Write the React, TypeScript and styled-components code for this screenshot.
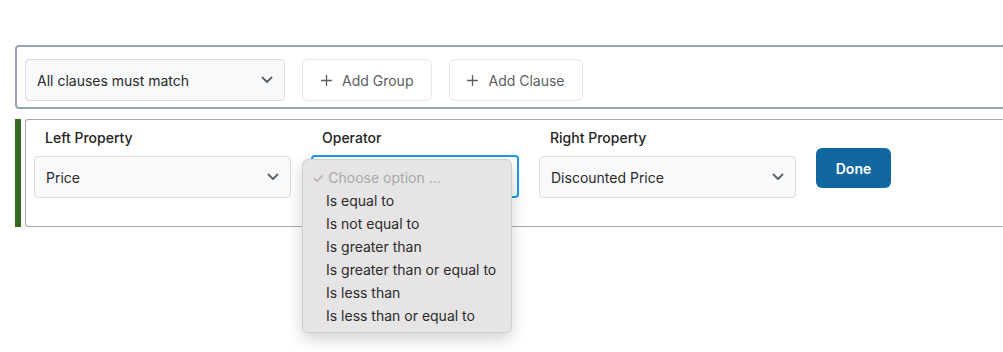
import styled, { createGlobalStyle } from "styled-components";

const GlobalStyle = createGlobalStyle`
  body {
    margin: 0;
    background: #ffffff;
    font-family: Inter, "Noto Sans", "Liberation Sans", sans-serif;
  }
`;

const Viewport = styled.div`
  width: 100vw;
  height: 352px;
  overflow: hidden;
`;

const Page = styled.div`
  padding: 45px 0 0 15px;
  width: 1100px;
  display: flex;
  flex-direction: column;
  gap: 10px;
`;

const GroupBox = styled.div`
  height: 64px;
  box-sizing: border-box;
  border: 2px solid #98a3b6;
  border-radius: 4px;
  padding: 12px 8px 0 8px;
  display: flex;
  gap: 17px;
`;

const SelectBox = styled.div<{ $width: number }>`
  position: relative;
  width: ${(p) => p.$width}px;
  height: 42px;
  box-sizing: border-box;
  background: #f8f9fb;
  border: 1px solid #d9dce1;
  border-radius: 4px;
  display: flex;
  align-items: center;
  justify-content: space-between;
  padding: 0 11px;
  font-size: 14px;
  color: #2a2a2a;
`;

const FocusSelect = styled.div`
  position: relative;
  width: 208px;
  height: 43px;
  margin-top: -1px;
  box-sizing: border-box;
  background: #ffffff;
  border: 2px solid #1a9be6;
  border-radius: 4px;
`;

const GhostButton = styled.button<{ $pad: number }>`
  height: 42px;
  box-sizing: border-box;
  background: #ffffff;
  border: 1px solid #e4e6ea;
  border-radius: 6px;
  padding: 0 ${(p) => p.$pad}px;
  display: flex;
  align-items: center;
  gap: 10px;
  font-family: inherit;
  font-size: 14px;
  color: #5a5d63;
`;

const ClauseRow = styled.div`
  display: flex;
  gap: 4px;
  height: 108px;
`;

const Marker = styled.div`
  width: 6px;
  background: #346b20;
`;

const ClauseBox = styled.div`
  flex: 1;
  border: 1px solid #a3a8b1;
  border-right: none;
  border-radius: 3px 0 0 3px;
  padding: 8px 8px 0 8px;
  display: flex;
  gap: 20px;
`;

const Field = styled.div`
  display: flex;
  flex-direction: column;
`;

const Label = styled.div`
  font-size: 14px;
  font-weight: 500;
  color: #242424;
  line-height: 20px;
  padding: 0 11px;
  margin-bottom: 8px;
`;

const DoneButton = styled.button`
  margin-top: 20px;
  width: 75px;
  height: 40px;
  background: #11689f;
  color: #ffffff;
  border: none;
  border-radius: 6px;
  font-family: inherit;
  font-weight: 600;
  font-size: 14px;
`;

const Menu = styled.div`
  position: absolute;
  left: -11px;
  top: 2px;
  width: 210px;
  box-sizing: border-box;
  background: #e6e4e5;
  border: 1px solid #cfcdce;
  border-radius: 6px;
  box-shadow: 0 6px 16px rgba(0, 0, 0, 0.18);
  padding: 6px 0 5px 0;
  z-index: 5;
`;

const MenuItem = styled.div<{ $placeholder?: boolean }>`
  height: 23px;
  line-height: 23px;
  padding-left: ${(p) => (p.$placeholder ? "9px" : "23px")};
  font-size: 14px;
  color: ${(p) => (p.$placeholder ? "#a9a8a9" : "#2b2b2b")};
  white-space: nowrap;
`;

function Chevron() {
  return (
    <svg width="12" height="8" viewBox="0 0 12 8" fill="none">
      <path d="M1.5 1.5L6 6L10.5 1.5" stroke="#5c5f66" strokeWidth="1.8" strokeLinecap="round" strokeLinejoin="round" />
    </svg>
  );
}

function PlusIcon() {
  return (
    <svg width="11" height="11" viewBox="0 0 11 11" fill="none">
      <path d="M5.5 0.5V10.5M0.5 5.5H10.5" stroke="#5a5d63" strokeWidth="1.3" strokeLinecap="round" />
    </svg>
  );
}

const operators = [
  "Is equal to",
  "Is not equal to",
  "Is greater than",
  "Is greater than or equal to",
  "Is less than",
  "Is less than or equal to",
];

export default function App() {
  return (
    <>
      <GlobalStyle />
      <Viewport>
        <Page>
          <GroupBox>
            <SelectBox $width={260}>
              All clauses must match
              <Chevron />
            </SelectBox>
            <GhostButton $pad={18}>
              <PlusIcon />
              Add Group
            </GhostButton>
            <GhostButton $pad={17}>
              <PlusIcon />
              Add Clause
            </GhostButton>
          </GroupBox>
          <ClauseRow>
            <Marker />
            <ClauseBox>
              <Field>
                <Label>Left Property</Label>
                <SelectBox $width={257}>
                  Price
                  <Chevron />
                </SelectBox>
              </Field>
              <Field>
                <Label>Operator</Label>
                <FocusSelect>
                  <Menu>
                    <MenuItem $placeholder>✓ Choose option ...</MenuItem>
                    {operators.map((op) => (
                      <MenuItem key={op}>{op}</MenuItem>
                    ))}
                  </Menu>
                </FocusSelect>
              </Field>
              <Field>
                <Label>Right Property</Label>
                <SelectBox $width={257}>
                  Discounted Price
                  <Chevron />
                </SelectBox>
              </Field>
              <DoneButton>Done</DoneButton>
            </ClauseBox>
          </ClauseRow>
        </Page>
      </Viewport>
    </>
  );
}
